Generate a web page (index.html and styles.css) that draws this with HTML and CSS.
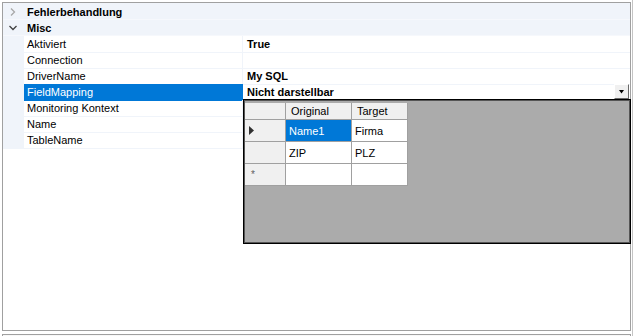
FILE: index.html
```html
<!DOCTYPE html>
<html lang="de">
<head>
  <meta charset="UTF-8" />
  <title>PropertyGrid</title>
  <link rel="stylesheet" href="styles.css">
</head>
<body>
  <div class="window">
    <div class="grid-frame">
      <div class="category first">
        <span class="toggle">
          <svg width="8" height="8" viewBox="0 0 8 8"><path d="M2 0.5 L5.5 4 L2 7.5" fill="none" stroke="#a8a8a8" stroke-width="1.3"/></svg>
        </span>
        <span class="cat-label">Fehlerbehandlung</span>
      </div>
      <div class="category">
        <span class="toggle">
          <svg width="8" height="8" viewBox="0 0 8 8"><path d="M0.5 2 L4 5.5 L7.5 2" fill="none" stroke="#404040" stroke-width="1.3"/></svg>
        </span>
        <span class="cat-label">Misc</span>
      </div>

      <div class="prop">
        <span class="margin"></span>
        <span class="name">Aktiviert</span>
        <span class="value">True</span>
      </div>
      <div class="prop">
        <span class="margin"></span>
        <span class="name">Connection</span>
        <span class="value"></span>
      </div>
      <div class="prop">
        <span class="margin"></span>
        <span class="name">DriverName</span>
        <span class="value">My SQL</span>
      </div>
      <div class="prop selected">
        <span class="margin"></span>
        <span class="name">FieldMapping</span>
        <span class="value">
          Nicht darstellbar
          <span class="drop-btn">
            <svg width="7" height="4" viewBox="0 0 7 4"><path d="M1 0 H6 L3.5 3.5 Z" fill="#000"/></svg>
          </span>
        </span>
      </div>
      <div class="prop">
        <span class="margin"></span>
        <span class="name">Monitoring Kontext</span>
        <span class="value"></span>
      </div>
      <div class="prop">
        <span class="margin"></span>
        <span class="name">Name</span>
        <span class="value"></span>
      </div>
      <div class="prop">
        <span class="margin"></span>
        <span class="name">TableName</span>
        <span class="value"></span>
      </div>

      <!-- drop-down editor for FieldMapping -->
      <div class="dropdown">
        <table class="mapping">
          <thead>
            <tr>
              <th class="rowhead"></th>
              <th class="col-orig">Original</th>
              <th class="col-target">Target</th>
            </tr>
          </thead>
          <tbody>
            <tr>
              <td class="rowhead">
                <svg width="5" height="9" viewBox="0 0 5 9"><path d="M0 0 L5 4.5 L0 9 Z" fill="#303030"/></svg>
              </td>
              <td class="cell-selected">Name1</td>
              <td>Firma</td>
            </tr>
            <tr>
              <td class="rowhead"></td>
              <td>ZIP</td>
              <td>PLZ</td>
            </tr>
            <tr>
              <td class="rowhead new-row">*</td>
              <td></td>
              <td></td>
            </tr>
          </tbody>
        </table>
      </div>
    </div>
    <div class="help-pane"></div>
  </div>
</body>
</html>
```

FILE: styles.css
```css
body {
  margin: 0;
  background: #fff;
  font-family: "Liberation Sans", Arial, sans-serif;
  font-size: 11px;
  color: #000;
}
.window {
  width: 633px;
  height: 336px;
  padding: 2px 0 0 0;
  box-sizing: border-box;
  border-right: 1px solid #c4c4c4;
  overflow: hidden;
}
.grid-frame {
  position: relative;
  margin-left: 2px;
  width: 629px;
  height: 329px;
  box-sizing: border-box;
  border: 1px solid #a0a0a0;
  background: #fff;
}
.category {
  display: flex;
  align-items: center;
  height: 16px;
  padding-top: 1px;
  background: #f0f4fa;
  font-weight: bold;
  border-bottom: 1px solid #f6f8fc;
  box-sizing: border-box;
}
.category.first {
  height: 17px;
  padding-top: 2px;
}
.toggle {
  width: 21px;
  display: flex;
  justify-content: center;
  padding-right: 2px;
  box-sizing: border-box;
}
.cat-label {
  padding-left: 3px;
}
.prop {
  display: grid;
  grid-template-columns: 21px 219px 1fr;
  height: 16px;
  line-height: 16px;
}
.margin {
  background: #f0f4fa;
}
.name {
  padding-left: 3px;
  border-right: 1px solid #f0f4fa;
  border-bottom: 1px solid #f0f4fa;
  white-space: nowrap;
}
.value {
  position: relative;
  padding-left: 4px;
  font-weight: bold;
  border-bottom: 1px solid #f0f4fa;
  white-space: nowrap;
}
.selected .name {
  background: #0078d7;
  color: #fff;
  border-color: #0078d7;
}
.drop-btn {
  position: absolute;
  right: 1px;
  top: 0;
  width: 15px;
  height: 15px;
  box-sizing: border-box;
  display: flex;
  align-items: center;
  justify-content: center;
  background: #f0f0f0;
  border-top: 1px solid #fff;
  border-left: 1px solid #fff;
  border-right: 1px solid #696969;
  border-bottom: 1px solid #696969;
}
.dropdown {
  position: absolute;
  left: 240px;
  top: 96px;
  width: 388px;
  height: 145px;
  box-sizing: border-box;
  border: 1px solid #000;
  box-shadow: inset 0 0 0 1px #555;
  background: #ababab;
  padding: 3px 0 0 1px;
}
.mapping {
  border-collapse: collapse;
  font-weight: normal;
}
.mapping th,
.mapping td {
  border: 1px solid #a0a0a0;
  padding: 0 0 0 3px;
  text-align: left;
  font-weight: normal;
  background: #fff;
  white-space: nowrap;
}
.mapping th {
  height: 16px;
  background: #f0f0f0;
  border-top: none;
  padding-left: 5px;
}
.mapping td {
  height: 21px;
}
.mapping .rowhead {
  width: 34px;
  background: #f0f0f0;
  border-left: none;
  padding-left: 4px;
}
.mapping th.rowhead {
  padding: 0;
}
.col-orig {
  width: 60px;
}
.col-target {
  width: 50px;
}
.mapping .cell-selected {
  background: #0078d7;
  color: #fff;
}
.new-row {
  color: #606060;
  font-size: 10px;
  padding-left: 6px !important;
}
.help-pane {
  margin: 3px 0 0 2px;
  width: 629px;
  height: 10px;
  box-sizing: border-box;
  border: 1px solid #a0a0a0;
  background: #f8f8f8;
}
```
